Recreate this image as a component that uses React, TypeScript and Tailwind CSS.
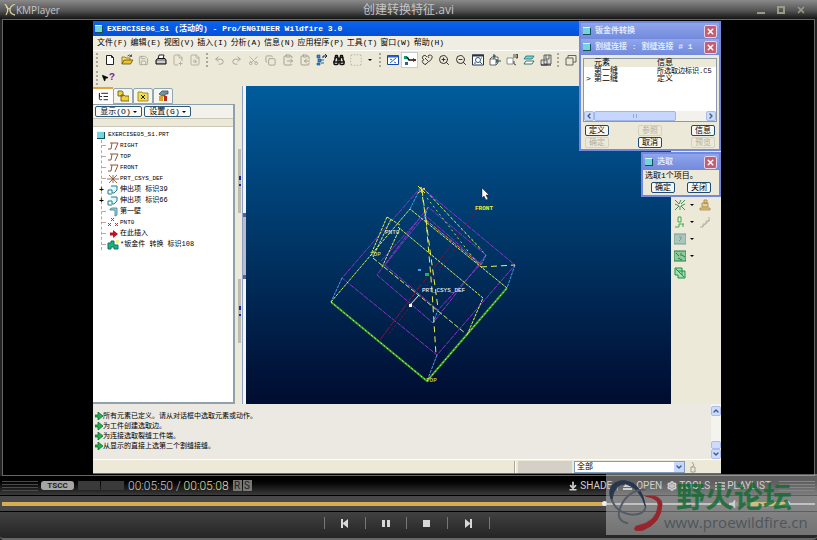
import React, { useState } from "react";
import {
    ArrowDownToLine,
    Binoculars,
    ChevronDown,
    ChevronLeft,
    ChevronRight,
    ChevronUp,
    ClipboardCopy,
    ClipboardPaste,
    Copy,
    FilePlus2,
    FileSearch,
    ListTree,
    MousePointer2,
    Redo2,
    Save,
    Scissors,
    Settings,
    SquareDashed,
    Undo2,
    X,
    ZoomIn,
    ZoomOut,
} from "lucide-react";

const menus = [
    "文件(F)",
    "编辑(E)",
    "视图(V)",
    "插入(I)",
    "分析(A)",
    "信息(N)",
    "应用程序(P)",
    "工具(T)",
    "窗口(W)",
    "帮助(H)",
];

const messages = [
    "所有元素已定义。请从对话框中选取元素或动作。",
    "为工件创建选取边。",
    "为连接选取裂缝工件端。",
    "从显示的直接上选第二个割缝接缝。",
];

// Small drawings that the icon package lacks
const NewIcon = () => (
    <svg viewBox="0 0 12 12" className="h-3 w-3">
        <path d="M2.5 1.500h5l2 2v7h-7z M7.500 1.500v2h2" fill="#fff" stroke="#222" />
    </svg>
);

const FolderIcon = () => (
    <svg viewBox="0 0 12 12" className="h-3 w-3">
        <path d="M1 10V3h3l1 1h4v2" fill="#f7e07a" stroke="#7d6412" strokeWidth=".8" />
        <path d="M1 10l2-4h9l-2.500 4z" fill="#ecc22d" stroke="#5f4c10" strokeWidth=".8" />
        <path d="M6.500 2q2.500-2 4 0m0-1.500v2h-2" fill="none" stroke="#333" strokeWidth=".8" />
    </svg>
);

const PrintIcon = () => (
    <svg viewBox="0 0 12 12" className="h-3 w-3">
        <path d="M3 5l1-4h5l-1 4" fill="#fff" stroke="#222" />
        <path d="M1 6l2-1.500h7l1 1.500v4H1z" fill="#999" stroke="#111" />
        <path d="M2 8h8" stroke="#fff" />
    </svg>
);

const RegenIcon = () => (
    <svg viewBox="0 0 12 12" className="h-3 w-3">
        <path d="M1 1h3v3H1zM2 5h3v3H2zM1 9h3v2H1z" fill="#2b8be0" stroke="#0b4a8c" strokeWidth=".6" />
        <path d="M5 9h3M5 6h3" stroke="#269" />
        <path d="M7 4V2h3m-1-2l2 2-2 2" fill="none" stroke="#124" />
    </svg>
);

const RepaintIcon = () => (
    <svg viewBox="0 0 12 12" className="h-3 w-3">
        <path d="M.5 1.500h11v9H.5z" fill="#fff" stroke="#1747a5" />
        <path d="M1 2.500h10" stroke="#2760cc" strokeWidth="2" />
        <path d="M3 9l6-5M3 5l2 1M7 8l2 1" stroke="#1b69bb" />
    </svg>
);

const SpinIcon = () => (
    <svg viewBox="0 0 14 12" className="h-3 w-3.5">
        <path d="M1 2h3v3H1z" fill="#0aa06a" />
        <path d="M2 8h3v3H2z" fill="#35589c" />
        <path d="M4 3l2 3h7" fill="none" stroke="#111" strokeWidth="1.500" />
        <path d="M10 4l3 2-3 2z" fill="#6b1c1c" />
    </svg>
);

const OrientIcon = () => (
    <svg viewBox="0 0 12 12" className="h-3 w-3">
        <path d="M6 3Q4 0 2 2T3 6Q0 6 2 9t5-1q3-1 4-4T8 1Q6 2 8 4M4 4l3 3M4 11l2-2" fill="none" stroke="#444" />
    </svg>
);

const RefitIcon = () => (
    <svg viewBox="0 0 12 12" className="h-3 w-3">
        <path d="M.5 1h11v10H.5z" fill="#fff" stroke="#24344f" />
        <path d="M0 1.500h12" stroke="#24344f" strokeWidth="2" />
        <circle cx="6" cy="6" r="2.500" fill="none" stroke="#357" />
        <path d="M8 8l2 2M2 9h2M9 4h1" stroke="#357" />
    </svg>
);

const ViewIcon = () => (
    <svg viewBox="0 0 12 12" className="h-3 w-3">
        <path d="M1 5h6v6H1zM1 5l2-2h6v6l-2 2" fill="#fff" stroke="#444" strokeWidth=".8" />
        <path d="M5 0v5M4 2h3M12 7H7m1-2v4" stroke="#174b55" />
    </svg>
);

const SavedViewIcon = () => (
    <svg viewBox="0 0 12 12" className="h-3 w-3">
        <path d="M1 4h6v6H1z" fill="#fff" stroke="#777" strokeWidth=".8" />
        <path d="M8 0v4M10 0h1.500v4H10zM8 7v3l2 1" fill="none" stroke="#222" strokeWidth=".8" />
    </svg>
);

const LayerIcon = () => (
    <svg viewBox="0 0 12 12" className="h-3 w-3">
        <path d="M1 5l2-3h8l-2 3z" fill="#7ad0d2" stroke="#177" strokeWidth=".8" />
        <path d="M1 10l2-3h8l-2 3z" fill="#fff" stroke="#155" strokeWidth=".8" />
    </svg>
);

const ViewMgrIcon = () => (
    <svg viewBox="0 0 12 12" className="h-3 w-3">
        <path d="M4 1h7v9H4zM1 6h6v5H1zM6 1v4h3V1" fill="#ddd" stroke="#444" strokeWidth=".8" />
        <path d="M1 11h10" stroke="#222" />
    </svg>
);

const WireIcon = () => (
    <svg viewBox="0 0 12 12" className="h-3 w-3">
        <path d="M1 4h7v7H1zM3 4V1.500h8V8H8" fill="none" stroke="#555" strokeWidth=".9" />
    </svg>
);

const CubeIcon = () => (
    <svg viewBox="0 0 8 8" className="h-2 w-2 shrink-0">
        <path d="M0 1h8v7H0z" fill="#174d5c" />
        <path d="M0 1h7v6H0z" fill="#6fd6dc" />
        <path d="M0 0h7v1H0z" fill="#cff" />
    </svg>
);

const PlaneIcon = () => (
    <svg viewBox="0 0 12 10" className="h-2.5 w-3 shrink-0">
        <path d="M1 8h3l1-6H3M5 2h6L8 9" fill="none" stroke="#8b5a3c" />
    </svg>
);

const CsysIcon = () => (
    <svg viewBox="0 0 12 10" className="h-2.5 w-3 shrink-0">
        <path d="M0 5h12M2 1l8 8M2 9l8-8M6 1v8" stroke="#8b5a3c" strokeWidth=".9" />
    </svg>
);

const ExtrudeIcon = () => (
    <svg viewBox="0 0 12 10" className="h-2.5 w-3 shrink-0">
        <path d="M4 1h6v4L7 8H5V5H1M1 5v4h4" fill="#d9fbfb" stroke="#2d7791" />
    </svg>
);

const WallIcon = () => (
    <svg viewBox="0 0 12 10" className="h-2.5 w-3 shrink-0">
        <path d="M3 2l2-1h5v7L8 9V3H3z" fill="#9adada" stroke="#387c86" strokeWidth=".8" />
    </svg>
);

const PointIcon = () => (
    <svg viewBox="0 0 12 10" className="h-2.5 w-3 shrink-0">
        <path d="M1 5l3 3m0-3L1 8M4 0l3 3m0-3L4 3M8 5l3 3m0-3L8 8" stroke="#a3442c" />
    </svg>
);

const InsertIcon = () => (
    <svg viewBox="0 0 12 10" className="h-2.5 w-3 shrink-0">
        <path d="M3 3.500h3V1l5 4-5 4V6.500H3z" fill="#c40f1c" />
    </svg>
);

const ConvertIcon = () => (
    <svg viewBox="0 0 12 10" className="h-2.5 w-3 shrink-0">
        <path d="M1 3h3V1h3v4h4v4H7V7H4v2H1z" fill="#1fb36c" stroke="#08737b" />
        <path d="M9 0h3v3H9z" fill="#f1f384" />
    </svg>
);

const tree = [
    { icon: <PlaneIcon />, label: "RIGHT" },
    { icon: <PlaneIcon />, label: "TOP" },
    { icon: <PlaneIcon />, label: "FRONT" },
    { icon: <CsysIcon />, label: "PRT_CSYS_DEF" },
    { icon: <ExtrudeIcon />, label: "伸出项 标识39", cjk: true, open: true },
    { icon: <ExtrudeIcon />, label: "伸出项 标识66", cjk: true, open: true },
    { icon: <WallIcon />, label: "第一壁", cjk: true },
    { icon: <PointIcon />, label: "PNT0" },
    { icon: <InsertIcon />, label: "在此插入", cjk: true },
    { icon: <ConvertIcon />, label: "*钣金件 转换 标识108", cjk: true },
];

const fileTools = [
    { name: "新建", icon: <NewIcon /> },
    { name: "打开", icon: <FolderIcon /> },
    { name: "保存", icon: <Save size={11} color="#aaa695" /> },
    { name: "打印", icon: <PrintIcon /> },
    { name: "发送", icon: <FilePlus2 size={12} color="#b5b1a1" /> },
    { name: "链接", icon: <FileSearch size={12} color="#b5b1a1" /> },
];

const editTools = [
    { name: "撤消", icon: <Undo2 size={11} color="#a5a191" /> },
    { name: "重做", icon: <Redo2 size={11} color="#a5a191" /> },
    { name: "剪切", icon: <Scissors size={11} color="#b0ac9c" className="-rotate-90" /> },
    { name: "复制", icon: <Copy size={11} color="#a5a191" /> },
    { name: "粘贴", icon: <ClipboardPaste size={12} color="#a5a191" /> },
    { name: "选择性粘贴", icon: <ClipboardCopy size={12} color="#a5a191" /> },
    { name: "再生", icon: <RegenIcon /> },
    { name: "查找", icon: <Binoculars size={12} color="#111" strokeWidth={3} /> },
    { name: "选取框", icon: <SquareDashed size={14} color="#8f8c80" strokeWidth={1} /> },
];

const viewTools = [
    { name: "重画", icon: <RepaintIcon /> },
    { name: "旋转中心", icon: <SpinIcon />, active: true },
    { name: "定向模式", icon: <OrientIcon /> },
    { name: "放大", icon: <ZoomIn size={12} color="#333" /> },
    { name: "缩小", icon: <ZoomOut size={12} color="#333" /> },
    { name: "重新调整", icon: <RefitIcon /> },
    { name: "重定向", icon: <ViewIcon /> },
    { name: "已命名视图", icon: <SavedViewIcon /> },
    { name: "层", icon: <LayerIcon /> },
    { name: "视图管理器", icon: <ViewMgrIcon /> },
];

type Tool = { name: string; icon: React.ReactNode; active?: boolean };

function ToolGroup({ tools }: { tools: Tool[] }) {
    return (
        <div className="flex">
            {tools.map((tool) => (
                <button
                    key={tool.name}
                    aria-label={tool.name}
                    className={
                        tool.active
                            ? "flex h-4 w-[17px] items-center justify-center border border-[#c5cbd8] bg-white"
                            : "flex h-4 w-[17px] items-center justify-center"
                    }
                >
                    {tool.icon}
                </button>
            ))}
        </div>
    );
}

const Grip = () => <div className="mx-[3px] h-3.5 w-0.5 border-l-2 border-dotted border-[#aaa798]" />;

function CloseButton() {
    return (
        <button
            aria-label="关闭"
            className="flex h-[13px] w-[13px] items-center justify-center rounded-[2px] border border-[#e5d5e8] bg-[#c35f74]"
        >
            <X size={9} color="#fff" strokeWidth={4} />
        </button>
    );
}

function DialogTitle({ text }: { text: string }) {
    return (
        <div className="flex h-4 items-center gap-1 bg-linear-to-b from-[#8fa5ec] to-[#7389dc] px-0.5">
            <CubeIcon />
            <h2 className="flex-1 text-[8px] leading-4 font-bold whitespace-nowrap text-[#dfe9ff]">{text}</h2>
            <CloseButton />
        </div>
    );
}

function DialogButton({ text, off }: { text: string; off?: boolean }) {
    return (
        <button
            disabled={off}
            className={
                off
                    ? "h-[11px] w-6 rounded-[2px] border border-[#d5d1c1] text-[8px] leading-[9px] text-[#b3af9f]"
                    : "h-[11px] w-6 rounded-[2px] border border-[#1e4a6f] bg-[#f7f6f1] text-[8px] leading-[9px] text-black"
            }
        >
            {text}
        </button>
    );
}

function ConvertDialog() {
    return (
        <section className="absolute top-0 right-0 w-[142px] border-2 border-[#7389dc] bg-[#ece9d8]">
            <DialogTitle text="钣金件转换" />
            <DialogTitle text="割缝连接 : 割缝连接 # 1" />
            <div className="mx-0.5 mt-[3px] flex h-16 flex-col border border-[#8a9aa8] bg-white">
                <table className="w-full table-fixed text-left text-[8px] leading-[8px]">
                    <thead className="bg-[#ece9d8]">
                        <tr>
                            <th className="w-[73px] pl-2.5 font-normal">元素</th>
                            <th className="font-normal">信息</th>
                        </tr>
                    </thead>
                    <tbody className="whitespace-nowrap">
                        <tr>
                            <td className="pl-2.5">第一缝</td>
                            <td className="text-[7px]">所选取边标识.C5</td>
                        </tr>
                        <tr>
                            <td>
                                <span className="inline-block w-2.5 pl-0.5">&gt;</span>第二缝
                            </td>
                            <td>定义</td>
                        </tr>
                    </tbody>
                </table>
                <div className="mt-auto flex h-2.5 bg-[#f2f1ec]">
                    <button aria-label="向左" className="flex w-2.5 items-center justify-center rounded-[2px] border border-[#aabdea] bg-[#cddcfc]">
                        <ChevronLeft size={8} color="#3d558c" strokeWidth={4} />
                    </button>
                    <div className="flex w-[82px] items-center justify-center rounded-[2px] border border-[#9fb5ec] bg-[#c6d6fc]">
                        <div className="h-1 w-1 border-x border-[#91a8dc]" />
                    </div>
                    <button aria-label="向右" className="ml-auto flex w-2.5 items-center justify-center rounded-[2px] border border-[#aabdea] bg-[#cddcfc]">
                        <ChevronRight size={8} color="#3d558c" strokeWidth={4} />
                    </button>
                </div>
            </div>
            <div className="flex justify-between px-1 pt-[3px]">
                <DialogButton text="定义" />
                <DialogButton text="参照" off />
                <DialogButton text="信息" />
            </div>
            <div className="flex justify-between px-1 pt-px pb-px">
                <DialogButton text="确定" off />
                <DialogButton text="取消" />
                <DialogButton text="预览" off />
            </div>
        </section>
    );
}

function SelectDialog() {
    return (
        <section className="absolute top-[131px] right-0 w-20 border-2 border-[#7389dc] bg-[#ece9d8]">
            <DialogTitle text="选取" />
            <p className="px-0.5 text-[8px] leading-[11px]">选取1个项目。</p>
            <div className="flex justify-between px-2 pt-px pb-0.5">
                <DialogButton text="确定" />
                <DialogButton text="关闭" />
            </div>
        </section>
    );
}

function ModelTree() {
    return (
        <aside className="flex w-[142px] flex-col">
            <div className="flex h-[18px] items-end">
                <button aria-label="模型树" className="flex h-[17px] w-5 items-center justify-center border-t-2 border-t-[#e8a33a] bg-white">
                    <ListTree size={11} color="#111" />
                </button>
                <button aria-label="文件夹浏览器" className="flex h-4 w-5 items-center justify-center rounded-t-[2px] border border-[#91a7b4] bg-[#f6f5ef]">
                    <svg viewBox="0 0 12 12" className="h-3 w-3">
                        <path d="M1 1h4l1 1v4H1zM4 5h3l1 1h4v5H4z" fill="#f0d13e" stroke="#5f5212" strokeWidth=".8" />
                    </svg>
                </button>
                <button aria-label="收藏夹" className="flex h-4 w-5 items-center justify-center rounded-t-[2px] border border-[#91a7b4] bg-[#f6f5ef]">
                    <svg viewBox="0 0 12 12" className="h-3 w-3">
                        <path d="M1 2h4l1 1h5v8H1z" fill="#f0dd52" stroke="#8a7a1d" strokeWidth=".8" />
                        <path d="M4 5l4 4m0-4L4 9" stroke="#222" />
                    </svg>
                </button>
                <button aria-label="连接" className="flex h-4 w-5 items-center justify-center rounded-t-[2px] border border-[#91a7b4] bg-[#f6f5ef]">
                    <svg viewBox="0 0 12 12" className="h-3 w-3">
                        <path d="M2 4l3-3h6v3H8v2H5z" fill="#6e93a6" stroke="#344" strokeWidth=".7" />
                        <path d="M2 6h4v5H2z" fill="#dda42a" />
                        <path d="M7 6h3v5H7z" fill="#bd2a1d" />
                    </svg>
                </button>
            </div>
            <div className="flex flex-1 flex-col border-t border-r-2 border-b-2 border-[#91a0ad] bg-[#f3f2ea]">
                <div className="flex gap-0.5 px-0.5 pt-px pb-px">
                    <button className="flex h-[11px] w-[47px] items-center justify-center gap-0.5 rounded-[2px] border border-[#2c5a78] bg-[#faf9f5] text-[8px] leading-[9px]">
                        显示(O)<span className="border-x-2 border-t-2 border-x-transparent border-t-black" />
                    </button>
                    <button className="flex h-[11px] w-[47px] items-center justify-center gap-0.5 rounded-[2px] border border-[#2c5a78] bg-[#faf9f5] text-[8px] leading-[9px]">
                        设置(G)<span className="border-x-2 border-t-2 border-x-transparent border-t-black" />
                    </button>
                </div>
                <div className="h-[9px] border-y border-[#c9c6b8] bg-[#ece9d8]" />
                <div className="flex-1 bg-white pt-0.5">
                    <div className="flex h-[11px] items-center gap-[3px] pl-1 text-[6px] leading-[11px] whitespace-nowrap">
                        <CubeIcon />
                        EXERCISE05_S1.PRT
                    </div>
                    <ul className="ml-2 border-l border-dashed border-[#b9a8a0]">
                        {tree.map((node) => (
                            <li key={node.label} className="flex h-[11px] items-center gap-px whitespace-nowrap">
                                {node.open ? (
                                    <span className="-ml-[3px] w-[7px] text-[8px] leading-[11px] font-bold">+</span>
                                ) : (
                                    <span className="w-1 border-t border-dashed border-[#b9a8a0]" />
                                )}
                                {node.icon}
                                <span className={node.cjk ? "text-[7px] leading-[11px]" : "text-[6px] leading-[11px]"}>
                                    {node.label}
                                </span>
                            </li>
                        ))}
                    </ul>
                </div>
            </div>
        </aside>
    );
}

const SplitGrip = () => (
    <div className="flex h-16 w-[3px] flex-col items-center justify-center gap-1 bg-[#bdbbb2]">
        <div className="h-1 w-0.5 bg-[#1b2c9b]" />
        <div className="h-0.5 w-0.5 bg-[#1b2c9b]" />
    </div>
);

function Splitter() {
    return (
        <div className="flex w-[11px] bg-[#ece9d8]">
            <div className="flex w-[7px] flex-col items-end gap-[66px] pt-[63px] pr-px">
                <SplitGrip />
                <SplitGrip />
            </div>
            <div className="flex flex-1 flex-col border-l border-[#8e9fc9] bg-[#f3f6f8] pt-[127px]">
                <div className="h-[66px] w-[3px] border-y-4 border-[#5a5f9e] bg-[#bdbbc6]" />
            </div>
        </div>
    );
}

// Wireframe of the sheet metal part
function Viewport() {
    return (
        <div className="min-w-0 flex-1 bg-linear-to-b from-[#005c9c] via-[#003566] to-[#000c30]">
            <svg viewBox="246 86 425 318" className="h-full w-full" fill="none" strokeWidth="1">
                <g stroke="#8a35c8" strokeDasharray="5 1">
                    <path d="M421 187L515 265L437 355L342 278Z" />
                    <path d="M428 207L377 275L433 323L486 255Z" />
                    <path d="M385 265L438 310L481 264L425 215Z" />
                    <path d="M381 261L421 217" />
                </g>
                <g stroke="#751545">
                    <path d="M481 205L380 340" strokeDasharray="7 2" />
                    <path d="M455 250L388 335M420 285l-40 55" strokeDasharray="2 2" />
                </g>
                <g stroke="#4c9fe8" strokeDasharray="3 1">
                    <path d="M342 278L331 302M437 355L427 381M515 265L507 288M410 209L421 187M428 207l-4 12M433 323l5-13M486 255l-5 10" />
                </g>
                <path d="M331 302L427 381L507 288" stroke="#2f9b22" strokeWidth="2" />
                <g stroke="#d9ef5c" strokeDasharray="3 1">
                    <path d="M331 302L427 381L507 288" strokeDasharray="2 2" />
                    <path d="M331 302L410 209L507 288" />
                    <path d="M398 227L483 298L467 335" />
                    <path d="M373 258L465 333" strokeDasharray="5 2" />
                    <path d="M400 228L382 267M387 217l13 8M387 217l-15 35M391 219l-18 38" />
                </g>
                <path d="M426 220L481 265" stroke="#e2765c" strokeDasharray="4 1" />
                <g stroke="#ecf24a" strokeDasharray="6 4">
                    <path d="M421 187L426 220L432 290L436 355" />
                    <path d="M422 190L430 250L438 308" />
                    <path d="M481 267L515 265" />
                </g>
                <g stroke="#a9dc63" strokeDasharray="2 3">
                    <path d="M424 189L486 255M427 198L478 264M423 188L482 250" />
                </g>
                <path d="M418 186l7 7m0-5l-7 5" stroke="#f6ef3c" />
                <path d="M410 305l9-10" stroke="#eee" />
                <path d="M425 273h4v3h-4z" fill="#19b84d" />
                <path d="M418 270h3" stroke="#479df0" strokeWidth="2" />
                <path d="M409 304h3v3h-3z" fill="#fff" />
                <g fontFamily="'Liberation Mono', monospace" fontSize="6" stroke="none">
                    <text x="475" y="210" fill="#e9ee35" fontWeight="bold">FRONT</text>
                    <text x="385" y="234" fill="#e8f0d8">PNT0</text>
                    <text x="370" y="256" fill="#dcec60">TOP</text>
                    <text x="422" y="292" fill="#fff">PRT_CSYS_DEF</text>
                    <text x="426" y="382" fill="#e6ec3c">TOP</text>
                </g>
                <path d="M482 188v10l2-2 2 4 2-1-2-4h3z" fill="#fff" stroke="#001" strokeWidth=".4" />
            </svg>
        </div>
    );
}

const sideTools = [
    {
        name: "壁",
        icon: <path d="M1 1l4 4 2-4M11 1L7 5m4 0L7 7l4 4M1 5l4 2-4 4M6 7v4" fill="none" stroke="#3f8f55" />,
        arrow: true,
        extra: <path d="M3 4h6v4H3zM1 9h10v2H1zM5 1h3v3H5z" fill="#e6cf92" stroke="#a5803f" strokeWidth=".8" />,
    },
    {
        name: "法兰",
        icon: <path d="M1 11h4V8h5M4 1h3v5H4zM9 8v3" fill="none" stroke="#43a84f" />,
        arrow: true,
        extra: <path d="M1 11h3V8h3V5h3V1M3 11l8-7" fill="none" stroke="#b5b1a4" />,
    },
    {
        name: "展平",
        icon: <path d="M0 1h12v10H0zM5 4q3-1 2 2l-2 2" fill="#a9c7bb" stroke="#7499a0" />,
        arrow: true,
    },
    {
        name: "折弯",
        icon: <path d="M0 1h12v10H0zM2 3l3 3m2-3v3m-3 2l4 2m0-5l3 2" fill="#8dc99a" stroke="#277e45" />,
        arrow: true,
    },
    { name: "转换", icon: <path d="M1 1h7v3h3v7H4V8H1zM4 4h4v4M2 2l8 8" fill="#a8dfb2" stroke="#189045" /> },
];

function SideTools() {
    return (
        <div className="w-[50px] bg-[#ece9d8] pt-[110px] pr-2.5 pl-[3px]">
            {sideTools.map((tool) => (
                <div key={tool.name} className="flex h-[17px] items-center">
                    <button aria-label={tool.name} className="flex items-center gap-1">
                        <svg viewBox="0 0 12 12" className="h-3 w-3">{tool.icon}</svg>
                        {tool.arrow && <span className="border-x-2 border-t-2 border-x-transparent border-t-black" />}
                    </button>
                    {tool.extra && (
                        <button aria-label={tool.name + "选项"} className="ml-auto">
                            <svg viewBox="0 0 12 12" className="h-3 w-3">{tool.extra}</svg>
                        </button>
                    )}
                </div>
            ))}
        </div>
    );
}

function MessageArea() {
    return (
        <div className="flex h-14 border-b border-white bg-[#ebe9e2]">
            <ul className="flex-1 pt-[7px] pl-0.5">
                {messages.map((message) => (
                    <li key={message} className="flex h-2.5 items-center text-[7px] leading-[10px]">
                        <svg viewBox="0 0 8 8" className="h-2 w-2">
                            <path d="M0 3h3V0l5 4-5 4V5H0z" fill="#20b34c" stroke="#0b5c26" strokeWidth=".7" />
                        </svg>
                        {message}
                    </li>
                ))}
            </ul>
            <div className="flex w-2.5 flex-col bg-[#f4f3ee] pt-0.5">
                <button aria-label="向上" className="flex h-2.5 items-center justify-center rounded-[2px] border border-[#aabdea] bg-[#cddcfc]">
                    <ChevronUp size={8} color="#3d558c" strokeWidth={4} />
                </button>
                <div className="mt-auto h-2 rounded-[2px] border border-[#aabdea] bg-[#cddcfc]" />
                <button aria-label="向下" className="flex h-2.5 items-center justify-center rounded-[2px] border border-[#aabdea] bg-[#cddcfc]">
                    <ChevronDown size={8} color="#3d558c" strokeWidth={4} />
                </button>
            </div>
        </div>
    );
}

function StatusBar() {
    return (
        <div className="flex h-3.5 items-center justify-end border-b border-[#4b6ca8] bg-[#ece9d8]">
            <div className="h-3 w-0.5 border-x border-l-[#aca899] border-r-white" />
            <div className="mx-0.5 h-3 w-[54px] bg-[#d4d0c8]" />
            <label className="relative flex">
                <select aria-label="过滤器" className="h-3 w-[111px] appearance-none border border-[#7f9db9] bg-white pl-0.5 text-[8px] leading-[10px]">
                    <option>全部</option>
                </select>
                <span className="pointer-events-none absolute top-px right-px flex h-2.5 w-2.5 items-center justify-center bg-[#c6d6fc]">
                    <ChevronDown size={8} color="#3d558c" strokeWidth={4} />
                </span>
            </label>
            <svg viewBox="0 0 8 12" className="mr-6 ml-1 h-3 w-2">
                <path d="M3 1l2 3-2 2M2 6h4v5H2z" fill="none" stroke="#a09c8e" />
            </svg>
        </div>
    );
}

function ProWindow() {
    return (
        <div className="relative flex min-w-0 flex-1 flex-col overflow-hidden bg-[#ece9d8] font-['Liberation_Mono','Noto_Sans_CJK_SC',monospace] text-black">
            <div className="flex h-[15px] items-center gap-1 bg-linear-to-b from-[#0a63ee] to-[#0450d8] pl-0.5">
                <CubeIcon />
                <h1 className="text-[8px] leading-[15px] font-bold whitespace-nowrap text-white">
                    EXERCISE06_S1 (活动的) - Pro/ENGINEER Wildfire 3.0
                </h1>
            </div>
            <nav className="flex h-[15px] items-center gap-[3px] border-b border-white bg-[#f0eee2] pl-1">
                {menus.map((menu) => (
                    <button key={menu} className="text-[8px] leading-[14px] whitespace-nowrap">
                        {menu}
                    </button>
                ))}
            </nav>
            <div className="flex h-[18px] items-center">
                <Grip />
                <ToolGroup tools={fileTools} />
                <Grip />
                <ToolGroup tools={editTools} />
                <span className="mx-1 border-x-2 border-t-2 border-x-transparent border-t-black" />
                <Grip />
                <ToolGroup tools={viewTools} />
                <Grip />
                <ToolGroup tools={[{ name: "线框", icon: <WireIcon /> }]} />
            </div>
            <div className="flex h-[17px] items-center">
                <Grip />
                <button aria-label="上下文帮助" className="flex items-center text-[10px] leading-3 font-bold text-[#7b2b8c]">
                    <MousePointer2 size={8} color="#000" fill="#000" />?
                </button>
            </div>
            <div className="flex min-h-0 flex-1">
                <ModelTree />
                <Splitter />
                <Viewport />
                <SideTools />
            </div>
            <MessageArea />
            <StatusBar />
            <ConvertDialog />
            <SelectDialog />
        </div>
    );
}

function PlayerTitle() {
    return (
        <header className="grid h-[19px] grid-cols-3 items-center bg-linear-to-b from-[#8a8a8a] via-[#555] via-55% to-[#161616] px-1 text-[#c5c5c5]">
            <div className="flex items-center text-[10px] leading-4">
                <svg viewBox="0 0 12 12" className="h-3 w-3">
                    <path d="M1 0q5 5 1 11M11 0Q6 2 6 6t5 5M2 3q3 2 4 2" fill="none" stroke="#d9cf9e" strokeWidth="1.300" />
                </svg>
                KMPlayer
            </div>
            <div className="text-center text-[12px] leading-4 whitespace-nowrap">创建转换特征.avi</div>
            <div className="flex justify-end gap-3 pr-2 text-[#9b9a88]">
                <button aria-label="最小化" className="flex h-2 w-2 items-end">
                    <span className="h-0.5 w-2 bg-[#9b9a88]" />
                </button>
                <button aria-label="最大化" className="h-2 w-2 border-2 border-[#9b9a88]" />
                <button aria-label="关闭播放器" className="flex h-2 w-2 items-center justify-center">
                    <X size={10} strokeWidth={4} className="shrink-0" />
                </button>
            </div>
        </header>
    );
}

const Stripes = () => (
    <div className="flex w-9 flex-col gap-0.5">
        <div className="h-px bg-[#4a4a4a]" />
        <div className="h-px bg-[#4a4a4a]" />
        <div className="h-px bg-[#4a4a4a]" />
        <div className="h-px bg-[#4a4a4a]" />
    </div>
);

function InfoBar() {
    return (
        <div className="flex h-5 items-center border-b border-black bg-linear-to-b from-black to-[#3b3b3b] px-0.5 font-['Roboto',sans-serif]">
            <Stripes />
            <span className="ml-[3px] flex h-[9px] w-[33px] items-center justify-center rounded-[3px] bg-[#a5a5a5] text-[8px] leading-[9px] font-bold text-[#222]">
                TSCC
            </span>
            <span className="ml-1 h-[9px] w-[22px] bg-[#3a3a3a]" />
            <span className="ml-px h-[9px] w-[23px] bg-[#3a3a3a]" />
            <span className="ml-1 text-[12px] leading-[18px] font-light whitespace-nowrap text-[#c8c8c8]">
                00:05:50 / <span className="text-[#e6df8d]">00:05:08</span>
            </span>
            <span className="ml-1 h-[11px] w-[9px] bg-[#777] text-center text-[10px] leading-[11px] text-[#222]">R</span>
            <span className="ml-px h-[11px] w-[9px] bg-[#777] text-center text-[10px] leading-[11px] text-[#222]">S</span>
            <div className="mr-2 ml-auto flex items-center gap-[5px] text-[10px] leading-[18px] text-[#cfcfcf]">
                <button className="flex items-center gap-0.5">
                    <ArrowDownToLine size={10} strokeWidth={4} />SHADE
                </button>
                <span className="h-2.5 w-px bg-[#777]" />
                <button className="flex items-center gap-1">
                    <svg viewBox="0 0 9 8" className="h-2 w-[9px]">
                        <path d="M0 5l4.500-5L9 5zM0 6h9v2H0z" fill="#ccc" />
                    </svg>
                    OPEN
                </button>
                <button className="flex items-center gap-0.5">
                    <Settings size={10} strokeWidth={4} />TOOLS
                </button>
                <button className="flex items-center gap-0.5">
                    <svg viewBox="0 0 10 8" className="h-2 w-2.5">
                        <path d="M0 1h2M0 4h2M0 7h2M3 1h7M3 4h7M3 7h7" stroke="#ccc" strokeWidth="1.500" />
                    </svg>
                    PLAYLIST
                </button>
            </div>
            <Stripes />
        </div>
    );
}

const sliderClass =
    "h-1 appearance-none rounded-none outline-none [&::-webkit-slider-thumb]:h-[5px] [&::-webkit-slider-thumb]:w-[5px] [&::-webkit-slider-thumb]:appearance-none [&::-webkit-slider-thumb]:rounded-full [&::-webkit-slider-thumb]:bg-[#eee]";

// Thick bar up to the thumb, hairline after it
function fill(value: number, color: string) {
    return {
        background: `linear-gradient(${color}, ${color}) 0 0 / ${value}% 100% no-repeat, linear-gradient(#b5b5b5, #b5b5b5) 0 50% / 100% 2px no-repeat`,
    };
}

function SeekBar() {
    const [position, setPosition] = useState(84);
    const [volume, setVolume] = useState(60);

    return (
        <div className="flex h-4 items-center gap-2 border-b border-black bg-[#484848] px-0.5">
            <input
                type="range"
                aria-label="播放进度"
                value={position}
                onChange={(e) => setPosition(Number(e.target.value))}
                className={"min-w-0 flex-1 " + sliderClass}
                style={fill(position, "#d6ad53")}
            />
            <svg viewBox="0 0 10 8" className="h-2 w-2.5">
                <path d="M0 3h3l3-3v8L3 5H0zM8 2v4" fill="#ccc" stroke="#ccc" strokeWidth=".6" />
            </svg>
            <input
                type="range"
                aria-label="音量"
                value={volume}
                onChange={(e) => setVolume(Number(e.target.value))}
                className={"w-[68px] " + sliderClass}
                style={fill(volume, "#c9b23c")}
            />
        </div>
    );
}

const playButtons = [
    { name: "上一个", path: "M1 0h2v4l5-4v9L3 5v4H1z" },
    { name: "暂停", path: "M1 1h3v7H1zM6 1h3v7H6z" },
    { name: "停止", path: "M1 1h7v7H1z" },
    { name: "下一个", path: "M1 0l5 4V0h2v9H6V5L1 9z" },
];

function Controls() {
    return (
        <div className="flex h-7 justify-center rounded-b-[4px] border-b-2 border-[#666] bg-linear-to-b from-[#414141] to-[#252525] pt-[5px] pr-1">
            <div className="flex h-3 divide-x divide-[#777] border-x border-[#777]">
                {playButtons.map((button) => (
                    <button key={button.name} aria-label={button.name} className="flex w-[41px] items-center justify-center">
                        <svg viewBox="0 0 9 9" className="h-[9px] w-[9px]">
                            <path d={button.path} fill="#d8d8d8" />
                        </svg>
                    </button>
                ))}
            </div>
        </div>
    );
}

function Watermark() {
    return (
        <div className="pointer-events-none absolute right-0 bottom-[5px] flex h-[61px] w-[211px] items-center bg-[#d0d0d0]/45">
            <svg viewBox="0 0 60 60" className="h-[60px] w-[58px] shrink-0" fill="none">
                <path d="M6 26C0 12 8 4 20 5q17 2 21 27Q35 12 20 8 8 8 6 26z" fill="#26364d" stroke="#26364d" />
                <path d="M6 24q4 14 21 16 13 0 14-8M41 14Q24 14 16 30T23 49" stroke="#555b64" strokeWidth="2" />
                <path d="M41 21q16-2 17 8-1 20-20 27-12 2-7-4 22-4 23-22 0-7-13-9z" fill="#96252c" stroke="#96252c" />
            </svg>
            <div className="whitespace-nowrap">
                <div className="pl-3 font-['Noto_Sans_CJK_SC',sans-serif] text-[29px] leading-[34px] font-bold text-[#0f6b30]/80">野火论坛</div>
                <div className="font-['Open_Sans',sans-serif] text-[15px] leading-5 text-[#4d565b]">www.proewildfire.cn</div>
            </div>
        </div>
    );
}

export default function App() {
    return (
        <div className="relative flex min-h-screen flex-col bg-[#222] font-['Open_Sans','Noto_Sans_CJK_SC',sans-serif]">
            <PlayerTitle />
            <main className="mx-0.5 flex flex-1 border border-[#666] bg-black py-px pr-[93px] pl-[90px]">
                <ProWindow />
            </main>
            <InfoBar />
            <SeekBar />
            <Controls />
            <Watermark />
        </div>
    );
}
